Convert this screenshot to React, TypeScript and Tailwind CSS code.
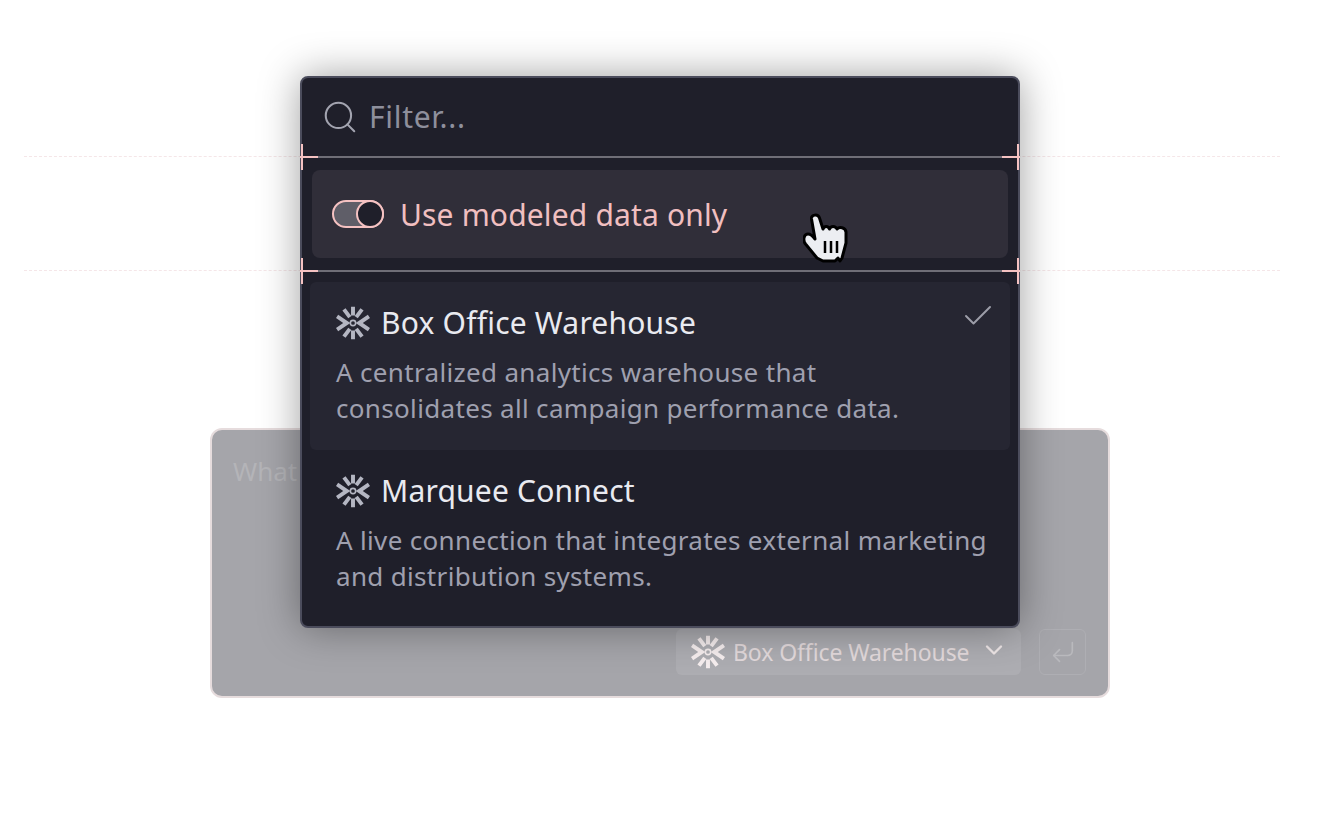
import { Search, Check, ChevronDown, CornerDownLeft } from 'lucide-react';

const SANS = 'font-["Noto_Sans",sans-serif]';

function SnowflakeLogo({ className }: { className?: string }) {
  return (
    <svg viewBox="0 0 32 32" className={className} fill="none" stroke="currentColor">
      <circle cx="16" cy="16" r="2.500" strokeWidth="1.500" />
      <g strokeWidth="3.700">
        <path d="M16 .8V9M7.500 3.200 13 10.500M24.500 3.200 19 10.500" />
        <path d="M16 31.200V23M7.500 28.800 13 21.500M24.500 28.800 19 21.500" />
        <path d="M1 9.800 10.200 16 1 22.200M31 9.800 21.800 16 31 22.200" />
      </g>
    </svg>
  );
}

function HandCursor() {
  return (
    <svg viewBox="0 0 46 50" className="absolute left-[803px] top-[213px] z-30 h-[50px] w-[46px]">
      <path
        d="M8.500 6C8 1.500 15 .5 16.500 5L20 16C21 12.500 25.500 12.500 26.500 16C27.500 12.500 32.500 12.500 34 16C36 13.500 42.500 14 43 19L43 30 39 45 37 48 35 45 32 48 20 48 14 45 2.500 31C-.5 27 1 21 5 21 8 21 10.500 24 12 26Z"
        fill="#eceef2"
        stroke="#000"
        strokeWidth="3"
        strokeLinejoin="round"
      />
      <path d="M22 28V40M28 28V40M34 28V40" stroke="#000" strokeWidth="2.500" />
    </svg>
  );
}

function GuideLine({ className }: { className: string }) {
  return (
    <div className={`absolute left-[24px] z-0 w-[1256px] border-t border-dashed border-[#f5e6e8] ${className}`} />
  );
}

function Divider({ className }: { className?: string }) {
  return (
    <div className={`relative h-[2px] bg-[#6f6e77] ${className ?? ''}`}>
      <span className="absolute -left-[2px] top-0 h-[2px] w-[18px] bg-[#f5c2c2]" />
      <span className="absolute -right-[2px] top-0 h-[2px] w-[18px] bg-[#f5c2c2]" />
      <span className="absolute -left-[1px] -top-[12px] h-[26px] w-[2px] bg-[#f5c2c2]" />
      <span className="absolute -right-[1px] -top-[12px] h-[26px] w-[2px] bg-[#f5c2c2]" />
    </div>
  );
}

const sources = [
  {
    name: 'Box Office Warehouse',
    desc: ['A centralized analytics warehouse that', 'consolidates all campaign performance data.'],
    selected: true,
  },
  {
    name: 'Marquee Connect',
    desc: ['A live connection that integrates external marketing', 'and distribution systems.'],
    selected: false,
  },
];

export default function App() {
  return (
    <div className={`relative flex h-[838px] w-[1320px] flex-col items-center overflow-hidden bg-white pt-[76px] ${SANS}`}>
      <GuideLine className="top-[156px]" />
      <GuideLine className="top-[270px]" />

      {/* Popover */}
      <div className="relative z-20 flex h-[552px] w-[720px] flex-col rounded-[8px] border-2 border-[#4b4c5c] bg-[#1f1f2a] shadow-[0_0_40px_rgba(0,0,0,0.38)]">
        <div className="flex h-[78px] items-center gap-[10px] pl-[19px]">
          <Search className="h-[38px] w-[38px] text-[#a3a4b0]" strokeWidth={1.300} />
          <span className="text-[30px] leading-none tracking-[0.7px] text-[#8e8f9c]">Filter...</span>
        </div>
        <Divider />
        <div className="mx-[10px] mt-[12px] flex h-[88px] items-center gap-[16px] rounded-[8px] bg-[#302e39] pl-[20px]">
          <div className="relative h-[28px] w-[52px] rounded-full border-2 border-[#f5c2c2] bg-[#5f5e68]">
            <span className="absolute -right-[2px] -top-[2px] h-[28px] w-[28px] rounded-full border-2 border-[#f5c2c2] bg-[#1f1f2a]" />
          </div>
          <span className="translate-y-px text-[30px] leading-none tracking-[0.16px] text-[#f0bfc0]">Use modeled data only</span>
        </div>
        <Divider className="mt-[12px]" />

        <div className="flex flex-1 flex-col px-[8px] pt-[10px]">
          {sources.map((s) => (
            <div
              key={s.name}
              className={`relative h-[168px] rounded-[6px] pl-[26px] pt-[21px] ${s.selected ? 'bg-[#262632]' : ''}`}
            >
              <div className="flex items-center gap-[11px]">
                <SnowflakeLogo className="h-[34px] w-[34px] text-[#b4b6c2]" />
                <span className="text-[30px] leading-[40px] tracking-[0.2px] text-[#e9eaf0]">{s.name}</span>
              </div>
              <p className="mt-[11px] text-[26px] leading-[36px] tracking-[0.33px] text-[#9fa0af]">
                {s.desc[0]}
                <br />
                {s.desc[1]}
              </p>
              {s.selected && (
                <Check className="absolute right-[14px] top-[16px] h-[36px] w-[36px] text-[#9d9ea9]" strokeWidth={1.300} />
              )}
            </div>
          ))}
        </div>
      </div>

      {/* Prompt card behind */}
      <div className="-mt-[200px] flex h-[270px] w-[900px] flex-col justify-between rounded-[12px] border-2 border-[#e6dcdd] bg-[#a5a5aa] pb-[21px] pl-[21px] pr-[22px] pt-[24px]">
        <span className="text-[26px] leading-[34px] text-[#b4b4b8]">What</span>
        <div className="flex items-center justify-end gap-[18px]">
          <div className="flex h-[46px] w-[345px] items-center rounded-[6px] bg-[#adadb2] pl-[15px]">
            <SnowflakeLogo className="h-[34px] w-[34px] text-[#f6eeef]" />
            <span className="ml-[8px] text-[23px] leading-none tracking-[-0.1px] text-[#e3dadc]">Box Office Warehouse</span>
            <ChevronDown className="ml-[11px] h-[28px] w-[28px] -translate-y-[2px] text-[#eee6e7]" strokeWidth={2} />
          </div>
          <div className="flex h-[46px] w-[47px] items-center justify-center rounded-[6px] border border-[#aeaeb3]">
            <CornerDownLeft className="h-[28px] w-[28px] text-[#b9b9bd]" strokeWidth={1.400} />
          </div>
        </div>
      </div>

      <HandCursor />
    </div>
  );
}
